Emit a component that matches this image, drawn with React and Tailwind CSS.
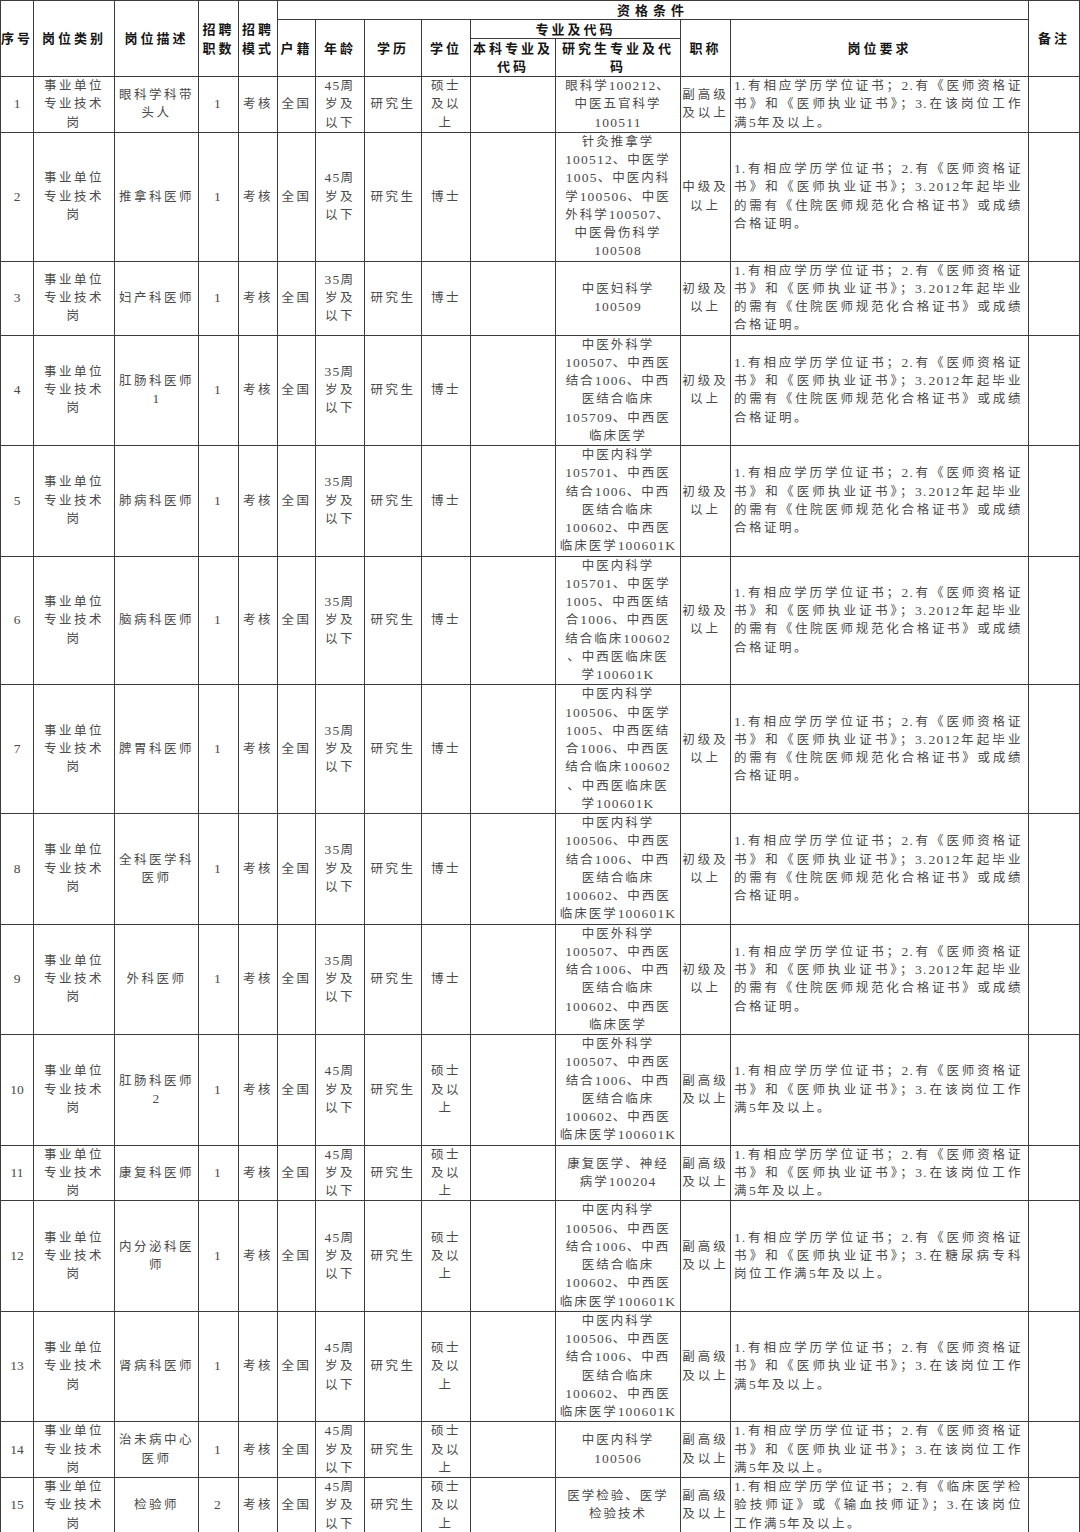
import React from 'react';

const req1 = [
  '1.有相应学历学位证书；2.有《医师资格证',
  '书》和《医师执业证书》；3.在该岗位工作',
  '满5年及以上。',
];
const req2 = [
  '1.有相应学历学位证书；2.有《医师资格证',
  '书》和《医师执业证书》；3.2012年起毕业',
  '的需有《住院医师规范化合格证书》或成绩',
  '合格证明。',
];
const req12 = [
  '1.有相应学历学位证书；2.有《医师资格证',
  '书》和《医师执业证书》；3.在糖尿病专科',
  '岗位工作满5年及以上。',
];
const req15 = [
  '1.有相应学历学位证书；2.有《临床医学检',
  '验技师证》或《输血技师证》；3.在该岗位',
  '工作满5年及以上。',
];

const age45 = ['45周', '岁及', '以下'];
const age35 = ['35周', '岁及', '以下'];
const master = ['硕士', '及以', '上'];
const senior = ['副高级', '及以上'];
const junior = ['初级及', '以上'];
const combined = ['中医内科学', '100506、中西医', '结合1006、中西', '医结合临床', '100602、中西医', '临床医学100601K'];

const rows = [
  { no: '1', desc: ['眼科学科带', '头人'], n: '1', age: age45, degree: master, major: ['眼科学100212、', '中医五官科学', '100511'], title: senior, req: req1 },
  { no: '2', desc: ['推拿科医师'], n: '1', age: age45, degree: ['博士'], major: ['针灸推拿学', '100512、中医学', '1005、中医内科', '学100506、中医', '外科学100507、', '中医骨伤科学', '100508'], title: ['中级及', '以上'], req: req2 },
  { no: '3', desc: ['妇产科医师'], n: '1', age: age35, degree: ['博士'], major: ['中医妇科学', '100509'], title: junior, req: req2 },
  { no: '4', desc: ['肛肠科医师', '1'], n: '1', age: age35, degree: ['博士'], major: ['中医外科学', '100507、中西医', '结合1006、中西', '医结合临床', '105709、中西医', '临床医学'], title: junior, req: req2 },
  { no: '5', desc: ['肺病科医师'], n: '1', age: age35, degree: ['博士'], major: ['中医内科学', '105701、中西医', '结合1006、中西', '医结合临床', '100602、中西医', '临床医学100601K'], title: junior, req: req2 },
  { no: '6', desc: ['脑病科医师'], n: '1', age: age35, degree: ['博士'], major: ['中医内科学', '105701、中医学', '1005、中西医结', '合1006、中西医', '结合临床100602', '、中西医临床医', '学100601K'], title: junior, req: req2 },
  { no: '7', desc: ['脾胃科医师'], n: '1', age: age35, degree: ['博士'], major: ['中医内科学', '100506、中医学', '1005、中西医结', '合1006、中西医', '结合临床100602', '、中西医临床医', '学100601K'], title: junior, req: req2 },
  { no: '8', desc: ['全科医学科', '医师'], n: '1', age: age35, degree: ['博士'], major: combined, title: junior, req: req2 },
  { no: '9', desc: ['外科医师'], n: '1', age: age35, degree: ['博士'], major: ['中医外科学', '100507、中西医', '结合1006、中西', '医结合临床', '100602、中西医', '临床医学'], title: junior, req: req2 },
  { no: '10', desc: ['肛肠科医师', '2'], n: '1', age: age45, degree: master, major: ['中医外科学', '100507、中西医', '结合1006、中西', '医结合临床', '100602、中西医', '临床医学100601K'], title: senior, req: req1 },
  { no: '11', desc: ['康复科医师'], n: '1', age: age45, degree: master, major: ['康复医学、神经', '病学100204'], title: senior, req: req1 },
  { no: '12', desc: ['内分泌科医', '师'], n: '1', age: age45, degree: master, major: combined, title: senior, req: req12 },
  { no: '13', desc: ['肾病科医师'], n: '1', age: age45, degree: master, major: combined, title: senior, req: req1 },
  { no: '14', desc: ['治未病中心', '医师'], n: '1', age: age45, degree: master, major: ['中医内科学', '100506'], title: senior, req: req1 },
  { no: '15', desc: ['检验师'], n: '2', age: age45, degree: master, major: ['医学检验、医学', '检验技术'], title: senior, req: req15 },
];

const td = 'border border-[#3c3c3c] p-0 align-middle text-center';
const th = 'border border-[#3c3c3c] p-0 align-middle text-center font-bold text-[#161616] tracking-[3px] text-[13px] leading-[17px]';

// digits and latin letters are set a bit larger with tighter spacing
function T({ s }) {
  return s.split(/([0-9A-Z]+)/).map((p, i) =>
    i % 2 ? (
      <span key={i} className="text-[13.5px] tracking-[1.2px]">
        {p}
      </span>
    ) : (
      p
    )
  );
}

function Lines({ lines }) {
  return lines.map((l, i) => (
    <div key={i} className="whitespace-nowrap">
      <T s={l} />
    </div>
  ));
}

export default function App() {
  return (
    <div className="bg-white w-[1080px] min-h-[1532px] font-['Liberation_Serif','Noto_Sans_CJK_SC',serif]">
      <table className="table-fixed border-collapse w-[1079px]">
        <colgroup>
          <col className="w-[33px]" />
          <col className="w-[81px]" />
          <col className="w-[84px]" />
          <col className="w-[40px]" />
          <col className="w-[39px]" />
          <col className="w-[38px]" />
          <col className="w-[49px]" />
          <col className="w-[57px]" />
          <col className="w-[49px]" />
          <col className="w-[85px]" />
          <col className="w-[125px]" />
          <col className="w-[50px]" />
          <col className="w-[298px]" />
          <col className="w-[51px]" />
        </colgroup>
        <thead>
          <tr className="h-[19px]">
            <th rowSpan={3} className={th + ' tracking-[1px]'}>序号</th>
            <th rowSpan={3} className={th}>岗位类别</th>
            <th rowSpan={3} className={th}>岗位描述</th>
            <th rowSpan={3} className={th + ' leading-[19px]'}>招聘<br />职数</th>
            <th rowSpan={3} className={th + ' leading-[19px]'}>招聘<br />模式</th>
            <th colSpan={8} className={th + ' tracking-[5px]'}>资格条件</th>
            <th rowSpan={3} className={th}>备注</th>
          </tr>
          <tr className="h-[19px]">
            <th rowSpan={2} className={th}>户籍</th>
            <th rowSpan={2} className={th}>年龄</th>
            <th rowSpan={2} className={th}>学历</th>
            <th rowSpan={2} className={th}>学位</th>
            <th colSpan={2} className={th}>专业及代码</th>
            <th rowSpan={2} className={th}>职称</th>
            <th rowSpan={2} className={th}>岗位要求</th>
          </tr>
          <tr className="h-[38px]">
            <th className={th + ' leading-[18px]'}>本科专业及<br />代码</th>
            <th className={th + ' leading-[18px]'}>研究生专业及代<br />码</th>
          </tr>
        </thead>
        <tbody className="text-[12.5px] leading-[18.25px] text-[#4a4a4a] tracking-[2.5px]">
          {rows.map((r) => (
            <tr key={r.no}>
              <td className={td + ' tracking-normal text-[13.5px]'}>{r.no}</td>
              <td className={td}><Lines lines={['事业单位', '专业技术', '岗']} /></td>
              <td className={td}><Lines lines={r.desc} /></td>
              <td className={td + ' text-[13.5px]'}>{r.n}</td>
              <td className={td}>考核</td>
              <td className={td}>全国</td>
              <td className={td}><Lines lines={r.age} /></td>
              <td className={td}>研究生</td>
              <td className={td}><Lines lines={r.degree} /></td>
              <td className={td}></td>
              <td className={td + ' tracking-[2px]'}><Lines lines={r.major} /></td>
              <td className={td + ' tracking-[3px]'}><Lines lines={r.title} /></td>
              <td className={td + ' text-left pl-[3px] pr-[5px]'}>
                {r.req.map((l, i) => (
                  <div
                    key={i}
                    className={
                      'whitespace-nowrap ' +
                      (i < r.req.length - 1 ? 'text-justify [text-align-last:justify]' : '')
                    }
                  >
                    <T s={l} />
                  </div>
                ))}
              </td>
              <td className={td}></td>
            </tr>
          ))}
        </tbody>
      </table>
    </div>
  );
}
